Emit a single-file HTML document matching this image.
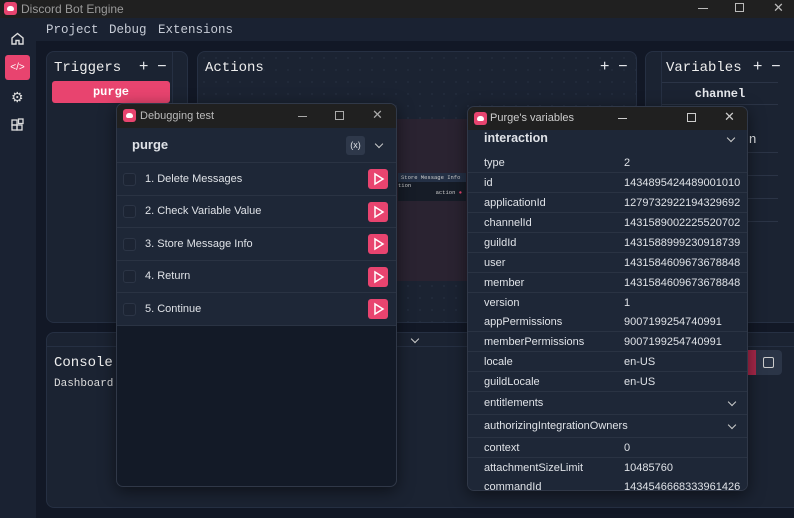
<!DOCTYPE html><html><head><style>
*{margin:0;padding:0;box-sizing:border-box}
body{width:794px;height:518px;overflow:hidden;background:#121826;font-family:"Liberation Sans",sans-serif;position:relative;color:#e6e8ec}
.a{position:absolute}
.mono{font-family:"Liberation Mono",monospace}
.panel{position:absolute;background:#1b2332;border:1px solid #263043;border-radius:8px}
.dots{background-image:radial-gradient(#252e40 0.7px,transparent 1px);background-size:12px 12px}
.win{position:absolute;background:#131a27;border:1px solid #303848;border-radius:7px;overflow:hidden;box-shadow:0 4px 16px rgba(0,0,0,.5)}
.wt{height:24px;background:#202020;position:relative;font-size:11px;color:#bbb}
.logo{position:absolute;width:13px;height:13px;background:#e8446f;border-radius:3px}
.logo:after{content:"";position:absolute;left:3px;top:4px;width:7px;height:5px;background:#fff;border-radius:3px 3px 2px 2px}
.row{position:absolute;left:0;right:0;background:#1e2737;border-bottom:1px solid #2a3343;font-size:11px;color:#dfe2e7}
.cb{position:absolute;left:6px;width:13px;height:13px;border:1px solid #2c3546;border-radius:3px;background:#1c2433}
.play{position:absolute;right:8px;width:20px;height:20px;background:#e8446f;border-radius:3px}
.vr{position:absolute;left:0;right:0;height:20px;background:#1e2737;border-bottom:1px solid #2a3343;font-size:11px;color:#dfe2e7;line-height:20px}
.vr span{position:absolute;left:16px}.vr b{position:absolute;left:156px;font-weight:normal}
.chev{position:absolute;width:6px;height:6px;border-right:1.5px solid #ccc;border-bottom:1.5px solid #ccc;transform:rotate(45deg)}
.mt{position:absolute;top:23px;font-family:"Liberation Mono",monospace;font-size:12.5px;color:#c7ccd6}
</style></head><body>
<div class="a" style="left:0;top:0;width:794px;height:18px;background:#202020"></div>
<div class="logo" style="left:4px;top:2px"></div>
<div class="a" style="left:21px;top:2px;font-size:12px;color:#9a9a9a">Discord Bot Engine</div>
<div class="a" style="left:698px;top:8px;width:10px;height:1px;background:#bbb"></div>
<div class="a" style="left:735px;top:3px;width:9px;height:9px;border:1px solid #bbb"></div>
<div class="a" style="left:773px;top:0px;font-size:13px;color:#bbb">✕</div>
<div class="a" style="left:0;top:18px;width:36px;height:500px;background:#1a2232"></div>
<div class="a" style="left:36px;top:18px;width:758px;height:23px;background:#1a2232"></div>
<div class="mt" style="left:46px">Project</div><div class="mt" style="left:109px">Debug</div><div class="mt" style="left:158px">Extensions</div>
<svg class="a" style="left:10px;top:31px" width="15" height="15" viewBox="0 0 15 15" fill="none" stroke="#ddd" stroke-width="1.4"><path d="M2 7 7.5 2.5 13 7v6H9V9.5H6V13H2z"/></svg>
<div class="a" style="left:5px;top:55px;width:25px;height:25px;background:#e8446f;border-radius:3px;color:#fff;font-size:10px;text-align:center;line-height:25px" >&lt;/&gt;</div>
<div class="a" style="left:11px;top:89px;font-size:14px;color:#ddd">⚙</div>
<svg class="a" style="left:10px;top:118px" width="15" height="15" viewBox="0 0 15 15" fill="none" stroke="#ddd" stroke-width="1.3"><rect x="2" y="7" width="5" height="5"/><rect x="7" y="7" width="5" height="5"/><rect x="2" y="2" width="5" height="5"/><rect x="8.5" y="1" width="4.5" height="4.5"/></svg>
<div class="panel" style="left:46px;top:51px;width:142px;height:272px">
<div class="a mono" style="left:7px;top:8px;font-size:14px;color:#eee">Triggers</div>
<div class="a" style="left:92px;top:6px;font-size:16px">+&nbsp;&nbsp;−</div>
<div class="a" style="left:125px;top:0;width:1px;height:270px;background:#263043"></div>
<div class="a mono" style="left:5px;top:29px;width:118px;height:22px;background:#e8446f;border-radius:3px;text-align:center;line-height:22px;font-size:12px;font-weight:bold;color:#fff">purge</div>
</div>
<div class="panel dots" style="left:197px;top:51px;width:440px;height:272px">
<div class="a mono" style="left:7px;top:8px;font-size:14px;color:#eee">Actions</div>
<div class="a" style="left:402px;top:6px;font-size:16px">+&nbsp;&nbsp;−</div>
<div class="a" style="left:199px;top:67px;width:75px;height:162px;background:#2a2331"></div>
<div class="a mono" style="left:200px;top:121px;width:68px;height:28px;background:#161c27;font-size:5.5px;color:#ccc;white-space:nowrap">
<div style="background:#243045;padding:1px 3px">Store Message Info</div><div>tion</div><div style="text-align:right;padding-right:4px">action <span style="color:#e8446f">●</span></div></div>
</div>
<div class="panel" style="left:645px;top:51px;width:160px;height:272px">
<div class="a" style="left:15px;top:0;width:1px;height:270px;background:#263043"></div>
<div class="a mono" style="left:20px;top:8px;font-size:14px;color:#eee">Variables</div>
<div class="a" style="left:107px;top:6px;font-size:16px">+&nbsp;&nbsp;−</div>
<div class="a mono" style="left:16px;top:30px;width:116px;height:23px;border-top:1px solid #2b3446;border-bottom:1px solid #2b3446;text-align:center;line-height:22px;font-size:12px;font-weight:bold">channel</div>
<div class="a mono" style="left:95px;top:80px;font-size:13px">on</div>
<div class="a mono" style="left:95px;top:126px;font-size:13px">t</div>
<div class="a" style="left:16px;top:100px;width:116px;height:1px;background:#2b3446"></div>
<div class="a" style="left:16px;top:123px;width:116px;height:1px;background:#2b3446"></div>
<div class="a" style="left:16px;top:146px;width:116px;height:1px;background:#2b3446"></div>
<div class="a" style="left:16px;top:169px;width:116px;height:1px;background:#2b3446"></div>
</div>
<div class="panel" style="left:46px;top:332px;width:760px;height:176px">
<div class="a" style="left:0;top:13px;width:760px;height:1px;background:#263043"></div>
<div class="a" style="left:365px;top:3px" ><div class="chev" style="position:relative;left:0;top:0"></div></div>
<div class="a mono" style="left:7px;top:22px;font-size:14px;color:#eee">Console</div>
<div class="a mono" style="left:7px;top:45px;font-size:11px;color:#ddd">Dashboard</div>
<div class="a" style="left:700px;top:17px;width:10px;height:25px;background:#a8284a"></div>
<div class="a" style="left:709px;top:17px;width:26px;height:25px;background:#2b3547;border-radius:0 4px 4px 0"></div>
<div class="a" style="left:716px;top:24px;width:11px;height:11px;border:1.5px solid #ccc;border-radius:2px"></div>
</div>
<div class="win" style="left:116px;top:103px;width:281px;height:384px">
<div class="wt"><div class="logo" style="left:6px;top:5px"></div><div class="a" style="left:23px;top:6px">Debugging test</div>
<div class="a" style="left:181px;top:12px;width:9px;height:1px;background:#aaa"></div>
<div class="a" style="left:218px;top:7px;width:9px;height:9px;border:1px solid #aaa"></div>
<div class="a" style="left:255px;top:3px;font-size:13px;color:#aaa">✕</div></div>
<div class="row" style="top:24px;height:35px"><div class="a" style="left:15px;top:9px;font-size:13px;font-weight:bold">purge</div>
<div class="a" style="left:229px;top:8px;width:19px;height:19px;background:#2e384a;border-radius:3px;font-size:9px;text-align:center;line-height:19px">(x)</div>
<div class="chev" style="left:259px;top:13px"></div></div>
<div class="row" style="top:59px;height:33px"><div class="cb" style="top:10px"></div><div class="a" style="left:28px;top:10px">1. Delete Messages</div><div class="play" style="top:6px"><svg width="20" height="20"><path d="M7 5v10l8-5z" fill="none" stroke="#fff" stroke-width="1.5"/></svg></div></div>
<div class="row" style="top:92px;height:32px"><div class="cb" style="top:9px"></div><div class="a" style="left:28px;top:9px">2. Check Variable Value</div><div class="play" style="top:6px"><svg width="20" height="20"><path d="M7 5v10l8-5z" fill="none" stroke="#fff" stroke-width="1.5"/></svg></div></div>
<div class="row" style="top:124px;height:33px"><div class="cb" style="top:10px"></div><div class="a" style="left:28px;top:10px">3. Store Message Info</div><div class="play" style="top:6px"><svg width="20" height="20"><path d="M7 5v10l8-5z" fill="none" stroke="#fff" stroke-width="1.5"/></svg></div></div>
<div class="row" style="top:157px;height:32px"><div class="cb" style="top:9px"></div><div class="a" style="left:28px;top:9px">4. Return</div><div class="play" style="top:6px"><svg width="20" height="20"><path d="M7 5v10l8-5z" fill="none" stroke="#fff" stroke-width="1.5"/></svg></div></div>
<div class="row" style="top:189px;height:33px"><div class="cb" style="top:10px"></div><div class="a" style="left:28px;top:10px">5. Continue</div><div class="play" style="top:6px"><svg width="20" height="20"><path d="M7 5v10l8-5z" fill="none" stroke="#fff" stroke-width="1.5"/></svg></div></div>
</div>
<div class="win" style="left:467px;top:106px;width:281px;height:385px;background:#1e2737">
<div class="wt" style="height:23px"><div class="logo" style="left:6px;top:5px"></div><div class="a" style="left:22px;top:5px;color:#ccc">Purge's variables</div>
<div class="a" style="left:150px;top:11px;width:9px;height:1px;background:#ccc"></div>
<div class="a" style="left:219px;top:6px;width:9px;height:9px;border:1px solid #ccc"></div>
<div class="a" style="left:256px;top:2px;font-size:13px;color:#ccc">✕</div></div>
<div class="vr" style="top:23px;height:24px;line-height:16px"><span style="font-weight:bold;font-size:12.5px">interaction</span><div class="chev" style="left:260px;top:5px"></div></div>
<div class="vr" style="top:46px"><span>type</span><b>2</b></div>
<div class="vr" style="top:66px"><span>id</span><b>1434895424489001010</b></div>
<div class="vr" style="top:86px"><span>applicationId</span><b>1279732922194329692</b></div>
<div class="vr" style="top:106px"><span>channelId</span><b>1431589002225520702</b></div>
<div class="vr" style="top:126px"><span>guildId</span><b>1431588999230918739</b></div>
<div class="vr" style="top:146px"><span>user</span><b>1431584609673678848</b></div>
<div class="vr" style="top:166px"><span>member</span><b>1431584609673678848</b></div>
<div class="vr" style="top:186px"><span>version</span><b>1</b></div>
<div class="vr" style="top:205px"><span>appPermissions</span><b>9007199254740991</b></div>
<div class="vr" style="top:225px"><span>memberPermissions</span><b>9007199254740991</b></div>
<div class="vr" style="top:245px"><span>locale</span><b>en-US</b></div>
<div class="vr" style="top:265px"><span>guildLocale</span><b>en-US</b></div>
<div class="vr" style="top:285px;height:23px;line-height:23px"><span>entitlements</span><div class="chev" style="left:261px;top:7px"></div></div>
<div class="vr" style="top:308px;height:23px;line-height:23px"><span>authorizingIntegrationOwners</span><div class="chev" style="left:261px;top:7px"></div></div>
<div class="vr" style="top:331px"><span>context</span><b>0</b></div>
<div class="vr" style="top:351px"><span>attachmentSizeLimit</span><b>10485760</b></div>
<div class="vr" style="top:370px"><span>commandId</span><b>1434546668333961426</b></div>
</div>
</body></html>
